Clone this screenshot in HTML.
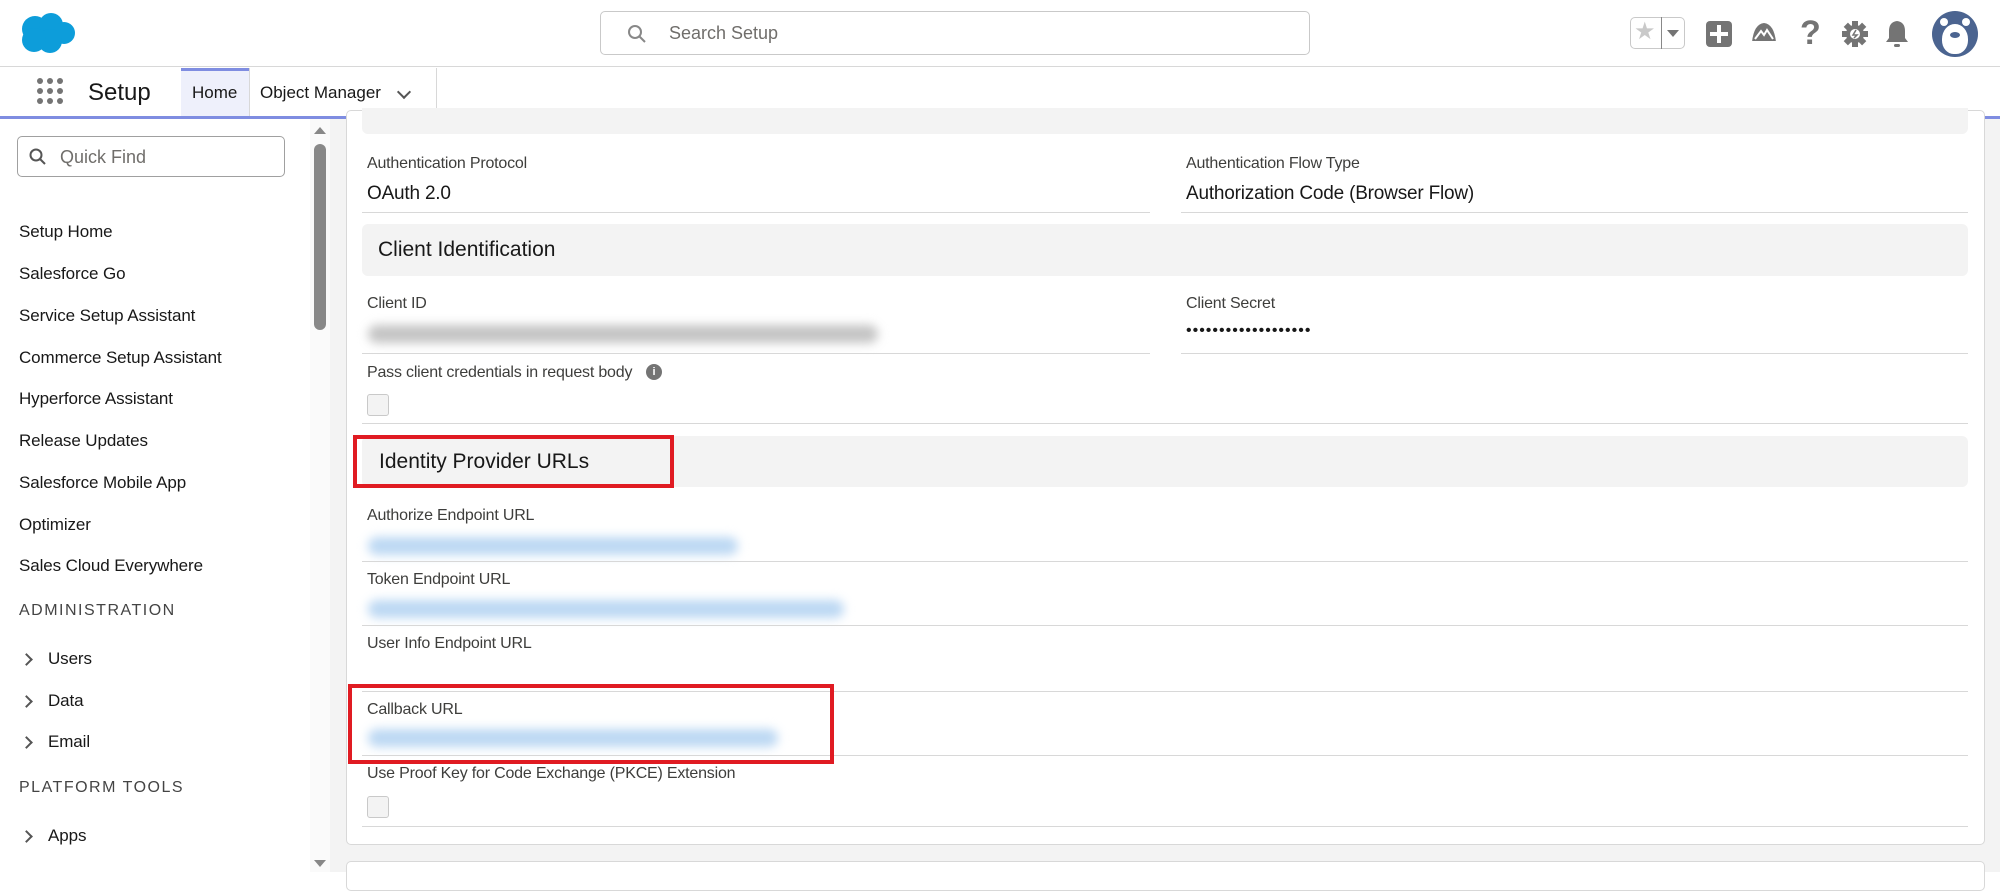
<!DOCTYPE html>
<html><head><meta charset="utf-8"><style>
*{box-sizing:border-box;margin:0;padding:0}
body{width:2000px;height:872px;overflow:hidden;background:#fff;font-family:"Liberation Sans",sans-serif;color:#181818;position:relative}
.a{position:absolute}
.lbl{position:absolute;font-size:16px;color:#3e3e3c;letter-spacing:-0.2px}
.val{position:absolute;font-size:19px;color:#181818;letter-spacing:-0.2px}
.ln{position:absolute;height:1px;background:#d8d8d8}
.sec{position:absolute;background:#f3f3f3;border-radius:6px}
.sec span{position:absolute;left:16px;font-size:21px;color:#181818}
.blur{position:absolute;height:18px;border-radius:9px;filter:blur(5px)}
.side{position:absolute;left:19px;font-size:17px;color:#181818;letter-spacing:-0.1px}
.hd{position:absolute;left:19px;font-size:16px;letter-spacing:1.5px;color:#444}
.chev{position:absolute;left:22px;width:9px;height:9px;border-right:2px solid #555;border-top:2px solid #555;transform:rotate(45deg)}
.cb{position:absolute;width:22px;height:22px;border:1px solid #c9c9c9;border-radius:3px;background:#f3f3f3}
.red{position:absolute;border:4px solid #e01b22}
</style></head><body>
<!-- header -->
<svg class="a" style="left:18px;top:12px" width="58" height="42" viewBox="0 0 58 42"><g fill="#0d9dda"><circle cx="17" cy="17" r="13"/><circle cx="33" cy="13" r="12"/><circle cx="46" cy="21" r="11"/><circle cx="32" cy="29" r="12"/><circle cx="16" cy="28" r="12"/></g></svg>
<div class="a" style="left:600px;top:11px;width:710px;height:44px;border:1px solid #c9c9c9;border-radius:5px"></div>
<svg class="a" style="left:627px;top:24px" width="20" height="20" viewBox="0 0 20 20"><circle cx="8" cy="8" r="6" fill="none" stroke="#888" stroke-width="2"/><path d="M12.5 12.5L18 18" stroke="#888" stroke-width="2"/></svg>
<div class="a" style="left:669px;top:23px;font-size:18px;color:#706e6b">Search Setup</div>
<div class="a" style="left:1630px;top:17px;width:55px;height:32px;border:1px solid #c9c9c9;border-radius:5px"></div>
<div class="a" style="left:1661px;top:17px;width:1px;height:32px;background:#888"></div>
<div class="a" style="left:1634px;top:17px;font-size:24px;color:#c9c9c9">★</div>
<div class="a" style="left:1667px;top:30px;border-left:6px solid transparent;border-right:6px solid transparent;border-top:7px solid #747474"></div>
<div class="a" style="left:1706px;top:21px;width:26px;height:26px;background:#747474;border-radius:4px"></div>
<div class="a" style="left:1717px;top:25px;width:4px;height:18px;background:#fff"></div>
<div class="a" style="left:1710px;top:32px;width:18px;height:4px;background:#fff"></div>
<svg class="a" style="left:1750px;top:20px" width="28" height="28" viewBox="0 0 28 28"><path d="M2 22 Q4 4 14 3 Q24 4 26 22Z" fill="#747474"/><path d="M5 19 L11 11 L14 15 L17 10 L23 19" stroke="#fff" stroke-width="2" fill="none"/><path d="M2 22H26" stroke="#fff" stroke-width="2"/></svg>
<div class="a" style="left:1800px;top:14px;font-size:34px;color:#747474;font-weight:bold">?</div>
<svg class="a" style="left:1842px;top:21px" width="26" height="26" viewBox="0 0 26 26"><g fill="#747474"><circle cx="13" cy="13" r="9"/><rect x="10" y="0" width="6" height="26"/><rect x="0" y="10" width="26" height="6"/><rect x="10" y="0" width="6" height="26" transform="rotate(45 13 13)"/><rect x="10" y="0" width="6" height="26" transform="rotate(-45 13 13)"/></g><circle cx="13" cy="13" r="5" fill="#fff"/><path d="M14 9L11 14H15L12 17" stroke="#747474" stroke-width="1.5" fill="none"/></svg>
<svg class="a" style="left:1884px;top:19px" width="26" height="30" viewBox="0 0 26 30"><path d="M13 2 Q5 3 5 12 V19 L2 23 H24 L21 19 V12 Q21 3 13 2Z" fill="#747474"/><rect x="10" y="25" width="6" height="3" rx="1.5" fill="#747474"/></svg>
<div class="a" style="left:1932px;top:11px;width:46px;height:46px;border-radius:50%;background:#4b6490"></div>
<div class="a" style="left:1942px;top:24px;width:26px;height:30px;border-radius:50% 50% 45% 45%;background:#fff"></div>
<div class="a" style="left:1940px;top:18px;width:8px;height:8px;border-radius:50%;background:#fff"></div>
<div class="a" style="left:1962px;top:18px;width:8px;height:8px;border-radius:50%;background:#fff"></div>
<div class="a" style="left:1950px;top:32px;width:10px;height:6px;border-radius:50%;background:#4b6490"></div>
<div class="a" style="left:0;top:66px;width:2000px;height:1px;background:#d8d8d8"></div>
<!-- nav -->
<svg class="a" style="left:36px;top:77px" width="28" height="28" viewBox="0 0 28 28"><g fill="#747474"><circle cx="4" cy="4" r="3"/><circle cx="14" cy="4" r="3"/><circle cx="24" cy="4" r="3"/><circle cx="4" cy="14" r="3"/><circle cx="14" cy="14" r="3"/><circle cx="24" cy="14" r="3"/><circle cx="4" cy="24" r="3"/><circle cx="14" cy="24" r="3"/><circle cx="24" cy="24" r="3"/></g></svg>
<div class="a" style="left:88px;top:79px;font-size:24px">Setup</div>
<div class="a" style="left:181px;top:68px;width:68px;height:49px;background:#eef0fb;border-top:3px solid #7f8de1"></div>
<div class="a" style="left:192px;top:83px;font-size:17px">Home</div>
<div class="a" style="left:249px;top:68px;width:1px;height:49px;background:#d8d8d8"></div>
<div class="a" style="left:260px;top:83px;font-size:17px">Object Manager</div>
<div class="a" style="left:399px;top:87px;width:10px;height:10px;border-right:2px solid #555;border-bottom:2px solid #555;transform:rotate(45deg)"></div>
<div class="a" style="left:436px;top:68px;width:1px;height:49px;background:#d8d8d8"></div>
<div class="a" style="left:0;top:116px;width:2000px;height:3px;background:#7f8de1"></div>
<!-- main bg -->
<div class="a" style="left:330px;top:119px;width:1670px;height:753px;background:#f3f3f3"></div>
<div class="a" style="left:346px;top:110px;width:1639px;height:735px;background:#fff;border:1px solid #d8d8d8;border-radius:5px"></div>
<div class="a" style="left:346px;top:861px;width:1639px;height:30px;background:#fff;border:1px solid #d8d8d8;border-radius:5px"></div>
<div class="sec" style="left:362px;top:108px;width:1606px;height:26px;border-radius:0 0 6px 6px"></div>
<!-- sidebar -->
<div class="a" style="left:0;top:119px;width:310px;height:753px;background:#fff"></div>
<div class="a" style="left:310px;top:119px;width:20px;height:753px;background:#fafafa"></div>
<div class="a" style="left:314px;top:127px;border-left:6px solid transparent;border-right:6px solid transparent;border-bottom:7px solid #888"></div>
<div class="a" style="left:314px;top:144px;width:12px;height:186px;border-radius:6px;background:#888"></div>
<div class="a" style="left:314px;top:860px;border-left:6px solid transparent;border-right:6px solid transparent;border-top:7px solid #888"></div>
<div class="a" style="left:17px;top:136px;width:268px;height:41px;border:1px solid #a0a0a0;border-radius:5px"></div>
<svg class="a" style="left:29px;top:148px" width="18" height="18" viewBox="0 0 18 18"><circle cx="7" cy="7" r="5.5" fill="none" stroke="#555" stroke-width="2"/><path d="M11 11L16 16" stroke="#555" stroke-width="2"/></svg>
<div class="a" style="left:60px;top:147px;font-size:18px;color:#706e6b">Quick Find</div>
<div class="side" style="top:222px">Setup Home</div>
<div class="side" style="top:264px">Salesforce Go</div>
<div class="side" style="top:306px">Service Setup Assistant</div>
<div class="side" style="top:348px">Commerce Setup Assistant</div>
<div class="side" style="top:389px">Hyperforce Assistant</div>
<div class="side" style="top:431px">Release Updates</div>
<div class="side" style="top:473px">Salesforce Mobile App</div>
<div class="side" style="top:515px">Optimizer</div>
<div class="side" style="top:556px">Sales Cloud Everywhere</div>
<div class="hd" style="top:602px">ADMINISTRATION</div>
<div class="chev" style="top:655px"></div><div class="side" style="left:48px;top:649px">Users</div>
<div class="chev" style="top:697px"></div><div class="side" style="left:48px;top:691px">Data</div>
<div class="chev" style="top:738px"></div><div class="side" style="left:48px;top:732px">Email</div>
<div class="hd" style="top:779px">PLATFORM TOOLS</div>
<div class="chev" style="top:832px"></div><div class="side" style="left:48px;top:826px">Apps</div>
<!-- content -->
<div class="lbl" style="left:367px;top:155px">Authentication Protocol</div>
<div class="val" style="left:367px;top:183px">OAuth 2.0</div>
<div class="ln" style="left:362px;top:212px;width:788px"></div>
<div class="lbl" style="left:1186px;top:155px">Authentication Flow Type</div>
<div class="val" style="left:1186px;top:183px">Authorization Code (Browser Flow)</div>
<div class="ln" style="left:1181px;top:212px;width:787px"></div>
<div class="sec" style="left:362px;top:224px;width:1606px;height:52px"><span style="top:14px">Client Identification</span></div>
<div class="lbl" style="left:367px;top:295px">Client ID</div>
<div class="blur" style="left:368px;top:325px;width:510px;background:#c4c4c4"></div>
<div class="ln" style="left:362px;top:353px;width:788px"></div>
<div class="lbl" style="left:1186px;top:295px">Client Secret</div>
<div class="val" style="left:1186px;top:322px;font-size:16px;letter-spacing:1px">•••••••••••••••••••</div>
<div class="ln" style="left:1181px;top:353px;width:787px"></div>
<div class="lbl" style="left:367px;top:364px">Pass client credentials in request body</div>
<div class="a" style="left:646px;top:364px;width:16px;height:16px;border-radius:50%;background:#747474;color:#fff;font-size:11px;font-weight:bold;text-align:center;line-height:16px">i</div>
<div class="cb" style="left:367px;top:394px"></div>
<div class="ln" style="left:362px;top:423px;width:1606px"></div>
<div class="sec" style="left:362px;top:436px;width:1606px;height:51px"><span style="top:14px;left:17px">Identity Provider URLs</span></div>
<div class="red" style="left:353px;top:435px;width:321px;height:53px"></div>
<div class="lbl" style="left:367px;top:507px">Authorize Endpoint URL</div>
<div class="blur" style="left:368px;top:537px;width:370px;background:#bcd8f3"></div>
<div class="ln" style="left:362px;top:561px;width:1606px"></div>
<div class="lbl" style="left:367px;top:571px">Token Endpoint URL</div>
<div class="blur" style="left:368px;top:600px;width:476px;background:#bcd8f3"></div>
<div class="ln" style="left:362px;top:625px;width:1606px"></div>
<div class="lbl" style="left:367px;top:635px">User Info Endpoint URL</div>
<div class="ln" style="left:362px;top:691px;width:1606px"></div>
<div class="lbl" style="left:367px;top:701px">Callback URL</div>
<div class="blur" style="left:368px;top:729px;width:410px;background:#bcd8f3"></div>
<div class="ln" style="left:362px;top:755px;width:1606px"></div>
<div class="red" style="left:348px;top:684px;width:486px;height:80px"></div>
<div class="lbl" style="left:367px;top:765px">Use Proof Key for Code Exchange (PKCE) Extension</div>
<div class="cb" style="left:367px;top:796px"></div>
<div class="ln" style="left:362px;top:826px;width:1606px"></div>
</body></html>
